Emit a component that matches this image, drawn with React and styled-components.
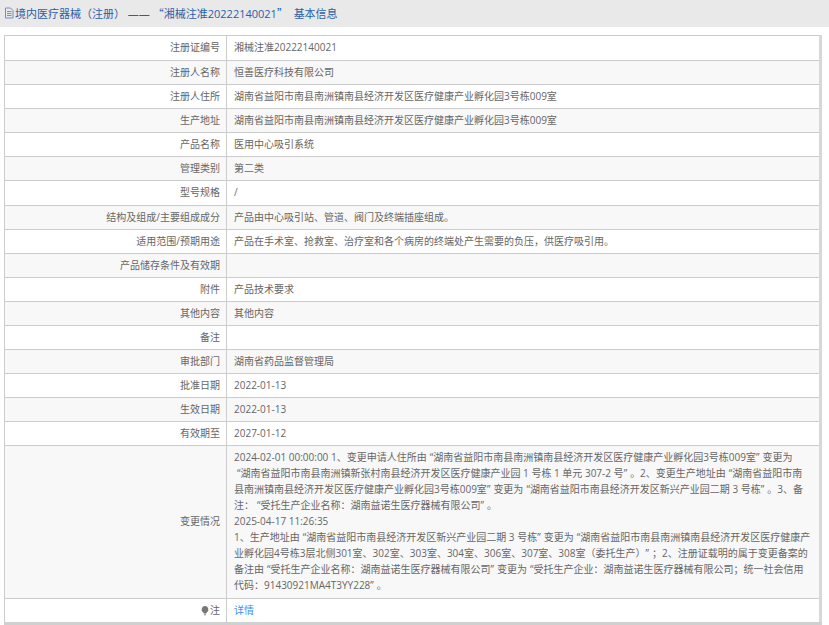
import React from 'react';
import styled, { createGlobalStyle } from 'styled-components';

const Global = createGlobalStyle`
  html, body {
    margin: 0;
    padding: 0;
    background: #fff;
    overflow: hidden;
  }
  body {
    font-family: "Open Sans", "Noto Sans CJK SC", sans-serif;
    font-size: 10px;
    color: #666;
    text-spacing-trim: space-all;
  }
`;

const Header = styled.h1`
  margin: 0 0 8px;
  height: 27px;
  padding: 0 0 2px 4px;
  box-sizing: border-box;
  display: flex;
  align-items: center;
  gap: 1px;
  background: #e9e9e9;
  font-size: 11px;
  font-weight: 400;
  color: #2b5ea7;
  white-space: pre;
`;

const Wrap = styled.div`
  padding: 0 7px 0 4px;
`;

const Table = styled.table`
  width: 818px;
  border-collapse: collapse;
  border: 1px solid #ccc;
  border-right: 3px solid #d8d8d8;
  border-bottom: 3px solid #d0d0d0;
`;

const Row = styled.tr`
  background: ${(p) => (p.$shade ? '#f8f8f8' : '#fff')};
`;

const Label = styled.td`
  width: 222px;
  box-sizing: border-box;
  padding: 3px 6px ${(p) => (p.$tall ? '5px' : '4px')};
  border: 1px solid #ccc;
  line-height: 16px;
  text-align: right;
`;

const Value = styled.td`
  padding: 3px 7px ${(p) => (p.$tall ? '5px' : '4px')};
  border: 1px solid #ccc;
  line-height: 16px;
`;

const Line = styled.div`
  white-space: nowrap;
`;

const Quote = styled.span`
  padding: ${(p) => (p.$open ? '0 0 0 3px' : '0 3px 0 0')};
`;

const HeadQuote = styled.span`
  font-family: "Noto Sans CJK SC", sans-serif;
`;

const Link = styled.a`
  color: #3c8dff;
  text-decoration: none;
`;

const Icon = styled.svg`
  width: 10px;
  height: 12px;
  flex: none;
`;

const Bulb = styled.svg`
  width: 8px;
  height: 11px;
  margin-right: 1px;
  vertical-align: -2px;
`;

// curly quotes sit narrower than a full em in the reference, so pad the latin glyph
const rich = (text) =>
  text.split(/([“”])/).map((part, i) =>
    i % 2 ? <Quote key={i} $open={part === '“'}>{part}</Quote> : part
  );

const rows = [
  ['注册证编号', '湘械注准20222140021'],
  ['注册人名称', '恒善医疗科技有限公司'],
  ['注册人住所', '湖南省益阳市南县南洲镇南县经济开发区医疗健康产业孵化园3号栋009室'],
  ['生产地址', '湖南省益阳市南县南洲镇南县经济开发区医疗健康产业孵化园3号栋009室'],
  ['产品名称', '医用中心吸引系统'],
  ['管理类别', '第二类'],
  ['型号规格', '/'],
  ['结构及组成/主要组成成分', '产品由中心吸引站、管道、阀门及终端插座组成。'],
  ['适用范围/预期用途', '产品在手术室、抢救室、治疗室和各个病房的终端处产生需要的负压，供医疗吸引用。'],
  ['产品储存条件及有效期', ''],
  ['附件', '产品技术要求'],
  ['其他内容', '其他内容'],
  ['备注', ''],
  ['审批部门', '湖南省药品监督管理局'],
  ['批准日期', '2022-01-13'],
  ['生效日期', '2022-01-13'],
  ['有效期至', '2027-01-12'],
];

const changes = [
  '2024-02-01 00:00:00 1、变更申请人住所由“湖南省益阳市南县南洲镇南县经济开发区医疗健康产业孵化园3号栋009室”变更为',
  '“湖南省益阳市南县南洲镇新张村南县经济开发区医疗健康产业园 1 号栋 1 单元 307-2 号”。2、变更生产地址由“湖南省益阳市南',
  '县南洲镇南县经济开发区医疗健康产业孵化园3号栋009室”变更为“湖南省益阳市南县经济开发区新兴产业园二期 3 号栋”。3、备',
  '注：“受托生产企业名称：湖南益诺生医疗器械有限公司”。',
  '2025-04-17 11:26:35',
  '1、生产地址由“湖南省益阳市南县经济开发区新兴产业园二期 3 号栋”变更为“湖南省益阳市南县南洲镇南县经济开发区医疗健康产',
  '业孵化园4号栋3层北侧301室、302室、303室、304室、306室、307室、308室（委托生产）”；2、注册证载明的属于变更备案的',
  '备注由“受托生产企业名称：湖南益诺生医疗器械有限公司”变更为“受托生产企业：湖南益诺生医疗器械有限公司；统一社会信用',
  '代码：91430921MA4T3YY228”。',
];

export default function App() {
  return (
    <>
      <Global />
      <Header>
        <Icon viewBox="0 0 10 12">
          <path d="M1.5 1h5l2.5 2.5V11h-7.5z M3 4.5h4.5 M3 6.5h4.5 M3 8.5h4.5" fill="none" stroke="#6f8fc0" strokeWidth="1" />
        </Icon>
        <span>
          境内医疗器械（注册） —— <HeadQuote>“</HeadQuote>湘械注准20222140021<HeadQuote>”</HeadQuote>{'  '}基本信息
        </span>
      </Header>
      <Wrap>
        <Table>
          <tbody>
            {rows.map(([label, value], i) => {
              const tall = i === 0 || i === 6;
              return (
                <Row key={label} $shade={i % 2 === 1}>
                  <Label $tall={tall}>{label}</Label>
                  <Value $tall={tall}>{value}</Value>
                </Row>
              );
            })}
            <Row $shade>
              <Label $tall>变更情况</Label>
              <Value $tall>
                {changes.map((line) => (
                  <Line key={line}>{rich(line)}</Line>
                ))}
              </Value>
            </Row>
            <Row>
              <Label>
                <Bulb viewBox="0 0 9 11">
                  <path d="M4.5 0.5a3.8 3.8 0 0 1 2.2 6.9L6 8.5H3l-.7-1.1A3.8 3.8 0 0 1 4.5 .5z" fill="#777" />
                  <path d="M3.2 9.4h2.6M3.6 10.5h1.8" stroke="#777" strokeWidth="0.9" />
                </Bulb>
                注
              </Label>
              <Value>
                <Link href="#">详情</Link>
              </Value>
            </Row>
          </tbody>
        </Table>
      </Wrap>
    </>
  );
}
